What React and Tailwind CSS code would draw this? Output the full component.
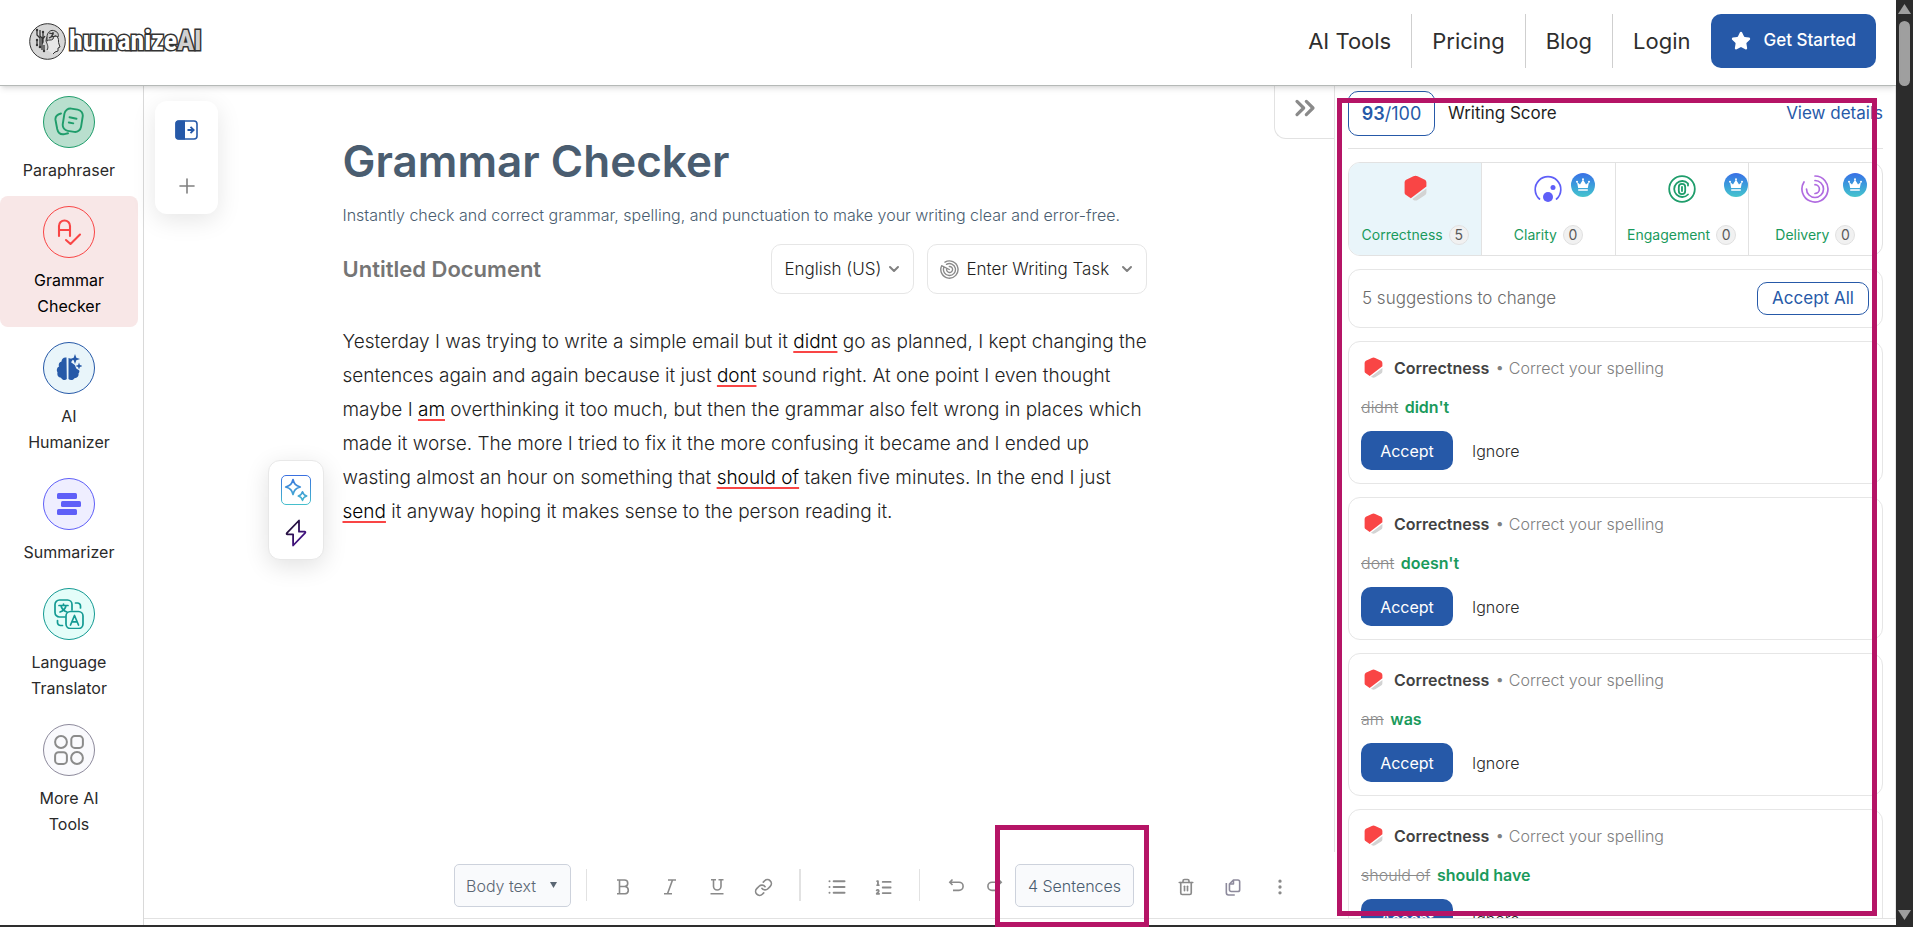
import { useState } from 'react'
import { ChevronDown, ChevronsRight, Link, List, ListOrdered, MoreVertical, Plus, Star, Trash2 } from 'lucide-react'

const SUGGESTIONS = [
  { id: 1, wrong: 'didnt', right: "didn't" },
  { id: 2, wrong: 'dont', right: "doesn't" },
  { id: 3, wrong: 'am', right: 'was' },
  { id: 4, wrong: 'should of', right: 'should have' },
]

const NAV_LINKS = ['AI Tools', 'Pricing', 'Blog', 'Login']

function Logo() {
  return (
    <a href="#" className="flex items-center gap-[3px]" aria-label="humanizeAI">
      <svg width="37" height="37" viewBox="0 0 37 37" fill="none" stroke="#333" strokeWidth="1">
        <circle cx="18.5" cy="18.5" r="17.8" fill="#d6d6d6" />
        <path d="M18 27c2-3 0-6-1-9 0-8 10-9 12-3 1 2 0 4 1 6l1 3-2 1v3l-3 1-2 2" fill="#e6e6e6" />
        <path d="M18 14c0-5 4-8 8-6 3 1 4 4 3 6-3-2-4-1-5 2-2 2-4 0-6 2z" fill="#ccc" />
        <path d="M20 10l4 1-2 3 5-1M24 9v3M20 15l4-2" strokeWidth="1.2" />
        <path d="M8 7v5l3 3v8M11 7v6l2 2v12M14 9v10l-1 2M8 17v4M16 13l-2 3M15 22v5" strokeWidth="1.3" />
        <g fill="#333" stroke="none">
          <circle cx="8" cy="7" r="1.2" />
          <circle cx="11" cy="24" r="1.3" />
          <circle cx="8" cy="17" r="1.2" />
          <circle cx="8" cy="22" r="1.2" />
          <circle cx="14" cy="9" r="1.2" />
          <circle cx="15" cy="28" r="1.2" />
        </g>
      </svg>
      <span className="font-['Liberation_Sans_Narrow','Roboto_Condensed',sans-serif] text-[28px] leading-9 font-bold text-white [-webkit-text-stroke:3px_#333] [paint-order:stroke_fill]">
        humanize<span className="text-[#d0d0d0]">AI</span>
      </span>
    </a>
  )
}

function ParaphraserIcon() {
  return (
    <svg width="30" height="30" viewBox="0 0 30 30" fill="none" stroke="#1f9d6b" strokeWidth="1.9" strokeLinecap="round" strokeLinejoin="round">
      <rect x="9.5" y="2" width="18.5" height="22.5" rx="6" transform="rotate(9 18.7 13.2)" />
      <path d="M7 6.5C3 7.5 1 9.5 1.5 13l1.7 9c.9 4 3.500 5.800 7.300 5.100l3.500-.8" />
      <path d="M15.5 10.3l7 1.4M14.8 15.5l4.5.9" />
    </svg>
  )
}

function GrammarIcon() {
  return (
    <svg width="26" height="28" viewBox="0 0 26 28" fill="none" stroke="#f94545" strokeWidth="2.1" strokeLinecap="round" strokeLinejoin="round">
      <path d="M3 18V8a5.5 5.5 0 0 1 11 0v10M3 12h11M10 22l4.5 4L24 16.5" />
    </svg>
  )
}

function HumanizerIcon() {
  return (
    <svg width="26" height="28" viewBox="0 0 26 28" fill="#2659a8">
      <path d="M10.500 3.500C7.500 3 5.500 5 5.500 7.500 3 8 2.200 10.500 3 12.500c-2.300 1-2.800 4-1.500 6-.7 3 1.200 5 3.500 5.200 1.500 2.800 4.500 2.800 5.800 1.300z" />
      <path d="M12.500 4v21c1.500 1.500 4.500 1.500 6-.8 2.800 0 4.500-2.200 4-4.700.9-1 1-2 .8-3l-3-2-1.500-3.500-3.800-2.800 2-2.700z" />
      <path d="M19 0l1.300 3.700L24 5l-3.700 1.300L19 10l-1.300-3.700L14 5l3.700-1.300z" />
      <path d="M23 8.500l.9 2.600 2.600.9-2.600.9-.9 2.600-.9-2.600-2.600-.9 2.600-.9z" />
    </svg>
  )
}

function SummarizerIcon() {
  return (
    <svg width="26" height="24" viewBox="0 0 26 24" fill="#5f5ff8">
      <rect x="1" y="1" width="20" height="6" rx="1.5" />
      <rect x="5" y="9" width="20" height="6" rx="1.5" />
      <rect x="1" y="17" width="20" height="6" rx="1.5" />
    </svg>
  )
}

function TranslatorIcon() {
  return (
    <svg width="30" height="30" viewBox="0 0 30 30" fill="none" stroke="#139a93" strokeWidth="1.7" strokeLinecap="round" strokeLinejoin="round">
      <path d="M11 18H5.500A4.500 4.500 0 0 1 1 13.500v-8A4.500 4.500 0 0 1 5.500 1h8A4.500 4.500 0 0 1 18 5.500V11" />
      <rect x="12" y="12.5" width="17" height="17" rx="4.5" />
      <path d="M5 6.500h9M9.500 5v1.500M7 6.500c.5 3 3 5.500 6 6.500M12 6.500c-.5 3-3 5.500-6 6.500" />
      <path d="M16.500 26l4-9.500 4 9.500M18 22.800h5M21.500 4h2a3 3 0 0 1 3 3v2M8.500 26.500h-2a3 3 0 0 1-3-3v-2" />
    </svg>
  )
}

function MoreToolsIcon() {
  return (
    <svg width="30" height="30" viewBox="0 0 30 30" fill="none" stroke="#8b8b8b" strokeWidth="2">
      <circle cx="7" cy="7" r="5.9" />
      <rect x="17.3" y="1.1" width="11.6" height="11.8" rx="3.5" />
      <rect x="1.1" y="17.3" width="11.8" height="11.6" rx="3.5" />
      <circle cx="23" cy="23" r="5.9" />
    </svg>
  )
}

const TOOLS = [
  { label: 'Paraphraser', icon: ParaphraserIcon, circle: 'border-[#1f9d6b] bg-[#b9dfce]' },
  { label: 'Grammar Checker', icon: GrammarIcon, circle: 'border-[#f94545] bg-[#f8e7e7]', active: true },
  { label: 'AI Humanizer', icon: HumanizerIcon, circle: 'border-[#2659a8] bg-[#e9f5fa]' },
  { label: 'Summarizer', icon: SummarizerIcon, circle: 'border-[#5f5ff8] bg-[#efeeff]' },
  { label: 'Language Translator', icon: TranslatorIcon, circle: 'border-[#139a93] bg-[#e4fdf9]' },
  { label: 'More AI Tools', icon: MoreToolsIcon, circle: 'border-[#8d8a9c] bg-[#fafafd]' },
]

function Header() {
  return (
    <header className="relative z-10 flex h-[86px] shrink-0 items-center justify-between border-b border-[#b5b9b7] bg-white pr-5 pb-[3px] pl-[29px] shadow-md">
      <Logo />
      <nav className="flex items-center">
        {NAV_LINKS.map((link) => (
          <a
            key={link}
            href="#"
            className="flex h-[54px] items-center border-r border-[#cfcfcf] px-5 text-[22px] text-[#2e2e2e] last-of-type:border-r-0"
          >
            {link}
          </a>
        ))}
        <button className="flex h-[54px] items-center gap-[13px] rounded-[10px] bg-[#2659a8] px-5 text-[17px] font-medium text-white">
          <Star size={20} fill="currentColor" />
          Get Started
        </button>
      </nav>
    </header>
  )
}

function Sidebar() {
  return (
    <aside className="flex w-36 shrink-0 flex-col gap-[5px] border-r border-[#d9d9d9] pr-[5px]">
      {TOOLS.map(({ label, icon: Icon, circle, active }) => (
        <a
          key={label}
          href="#"
          className={`flex flex-col items-center gap-[9px] rounded-lg px-5 pt-[10px] pb-2 ${active ? 'bg-[#f8e7e7] text-black' : 'text-[#2a2a2a]'}`}
        >
          <span className={`flex size-[52px] items-center justify-center rounded-full border ${circle}`}>
            <Icon />
          </span>
          <span className="text-center text-[16px] leading-[26px]">{label}</span>
        </a>
      ))}
    </aside>
  )
}

function PanelToggles() {
  return (
    <div className="mt-[15px] ml-[11px] flex h-[113px] w-[63px] shrink-0 flex-col items-center justify-between rounded-xl bg-white pt-[19px] pb-4 shadow-[0_6px_24px_rgba(0,0,0,0.1)]">
      <button aria-label="Open documents">
        <svg width="23" height="20" viewBox="0 0 23 20" fill="none" stroke="#2659a8">
          <rect x="1" y="1" width="21" height="18" rx="3" strokeWidth="1.6" />
          <path d="M3 .5h7v19H3A2.500 2.500 0 0 1 .5 17V3A2.500 2.500 0 0 1 3 .5z" fill="#2659a8" stroke="none" />
          <path d="M12.500 10h6M15.500 6.800l3.200 3.200-3.200 3.200" strokeWidth="1.8" />
        </svg>
      </button>
      <button aria-label="New document" className="text-[#808080]">
        <Plus size={24} strokeWidth={1.6} />
      </button>
    </div>
  )
}

function QuickActions() {
  return (
    <div className="absolute top-[135px] -left-[75px] flex h-[100px] w-14 flex-col items-center justify-between rounded-xl border border-[#e8e8e8] bg-white pt-[14px] pb-3 shadow-[0_6px_24px_rgba(0,0,0,0.12)]">
      <button aria-label="Improve writing">
        <svg width="30" height="30" viewBox="0 0 30 30" fill="none" stroke="url(#spark)" strokeLinejoin="round">
          <defs>
            <linearGradient id="spark" gradientUnits="userSpaceOnUse" x1="0" y1="0" x2="0" y2="30">
              <stop stopColor="#3a6fe0" />
              <stop offset="1" stopColor="#46c0cc" />
            </linearGradient>
          </defs>
          <rect x=".5" y=".5" width="29" height="29" rx="4.5" />
          <path d="M12 4.500c1.200 4.500 2.500 6 7.300 7.500-4.800 1.500-6.100 3-7.300 7.500-1.200-4.500-2.500-6-7.300-7.500 4.800-1.500 6.100-3 7.300-7.500z" strokeWidth="1.7" />
          <path d="M21.500 16.800c.7 2.600 1.500 3.500 4.200 4.300-2.700.8-3.500 1.700-4.200 4.300-.7-2.600-1.500-3.500-4.200-4.300 2.700-.8 3.500-1.700 4.200-4.300z" strokeWidth="1.6" />
        </svg>
      </button>
      <button aria-label="Quick fix">
        <svg width="22" height="28" viewBox="0 0 22 28" fill="none" stroke="url(#bolt)" strokeWidth="1.8" strokeLinejoin="round">
          <defs>
            <linearGradient id="bolt" gradientUnits="userSpaceOnUse" x1="0" y1="0" x2="22" y2="20">
              <stop stopColor="#111" />
              <stop offset="1" stopColor="#4a1196" />
            </linearGradient>
          </defs>
          <path d="M14 1.500L1.800 14.200c-.4.500-.2 1.100.5 1.100h5.800v11.200L20.200 13.800c.4-.5.200-1.100-.5-1.100H14z" />
        </svg>
      </button>
    </div>
  )
}

function TargetIcon() {
  return (
    <svg className="pointer-events-none absolute left-[13px]" width="19" height="19" viewBox="0 0 19 19" fill="none" stroke="#8a8a8a" strokeWidth="1.4" strokeLinecap="round">
      <path d="M5 2.200a8.600 8.600 0 1 1-3.300 3.600M6.500 4.300a6 6 0 1 1-2.700 3.200M9.300 6.500a3 3 0 1 1-2.600 2.200M2 5.800l7.300 3.700" />
    </svg>
  )
}

function Select({ label, option, icon, className }) {
  return (
    <div className="relative flex items-center">
      <select
        aria-label={label}
        className={`h-[50px] appearance-none rounded-[10px] border border-[#e6e6e6] bg-white pt-0.5 text-[17px] font-light text-[#1f1f1f] ${className}`}
      >
        <option>{option}</option>
      </select>
      {icon}
      <ChevronDown size={16} strokeWidth={3} className="pointer-events-none absolute right-3 text-[#808080]" />
    </div>
  )
}

function Mistake({ children }) {
  return (
    <span className="text-black underline decoration-[#f94545] decoration-2 underline-offset-[3px] [text-decoration-skip-ink:none]">
      {children}
    </span>
  )
}

function Editor() {
  return (
    <div className="flex min-h-0 flex-1 items-start border-r border-[#e2e2e2]">
      <PanelToggles />
      <div className="min-w-0 flex-1 pr-[3px]">
        <div className="mx-auto max-w-[804px] pt-[47px]">
          <h1 className="text-[44px] leading-[56px] font-semibold text-[#4a5d70]">Grammar Checker</h1>
          <p className="mt-[14px] text-[16px] leading-6 font-light text-[#4a5d70]">
            Instantly check and correct grammar, spelling, and punctuation to make your writing clear and error-free.
          </p>
          <div className="mt-[17px] flex items-center justify-between">
            <h2 className="text-[22px] font-semibold text-[#757575]">Untitled Document</h2>
            <div className="flex gap-[13px]">
              <Select label="Language" option="English (US)" className="w-[143px] pl-[13px]" />
              <Select label="Writing task" option="Enter Writing Task" icon={<TargetIcon />} className="w-[220px] pl-[39px]" />
            </div>
          </div>
          <div className="relative mt-[31px] -mr-3">
            <QuickActions />
            <p className="text-[19px] leading-[34px] font-light text-[#1f1f1f]">
              Yesterday I was trying to write a simple email but it <Mistake>didnt</Mistake> go as planned, I kept
              changing the sentences again and again because it just <Mistake>dont</Mistake> sound right. At one point I
              even thought maybe I <Mistake>am</Mistake> overthinking it too much, but then the grammar also felt wrong
              in places which made it worse. The more I tried to fix it the more confusing it became and I ended up
              wasting almost an hour on something that <Mistake>should of</Mistake> taken five minutes. In the end I
              just <Mistake>send</Mistake> it anyway hoping it makes sense to the person reading it.
            </p>
          </div>
        </div>
      </div>
      <button aria-label="Collapse panel" className="flex h-[53px] w-[60px] shrink-0 items-center justify-center rounded-bl-xl border-b border-l border-[#e2e2e2] pb-2 text-[#8a8a8a]">
        <ChevronsRight size={32} strokeWidth={2.4} />
      </button>
    </div>
  )
}

function ToolButton({ label, children, className = 'w-[47px]' }) {
  return (
    <button aria-label={label} className={`flex h-8 items-center justify-center pt-1 text-[#8a8a8a] ${className}`}>
      {children}
    </button>
  )
}

function Glyph({ d }) {
  return (
    <svg width="18" height="18" viewBox="0 0 18 18" fill="none" stroke="currentColor" strokeWidth="1.6">
      <path d={d} />
    </svg>
  )
}

function Toolbar() {
  return (
    <div className="flex h-[66px] shrink-0 items-center justify-end pr-8">
      <div className="relative mr-[15px] flex items-center">
        <select
          aria-label="Text style"
          className="h-[43px] w-[117px] appearance-none rounded-[5px] border border-[#cdd2dc] bg-[#f9fafc] pt-0.5 pl-[11px] text-[16px] font-light text-[#5b6673]"
        >
          <option>Body text</option>
        </select>
        <svg className="pointer-events-none absolute right-[14px]" width="7" height="6" viewBox="0 0 7 6" fill="#5b6673">
          <path d="M0 0h7L3.500 6z" />
        </svg>
      </div>
      <div className="flex border-l border-[#e2e2e2] px-3">
        <ToolButton label="Bold"><Glyph d="M3 2h7.500a3.200 3.200 0 0 1 0 6.500H5.500M5.500 8.500h5.700a3.700 3.700 0 0 1 0 7.300H3M5.500 2v13.800" /></ToolButton>
        <ToolButton label="Italic"><Glyph d="M7 2h8M3 15.800h8M11.500 2L6.500 15.800" /></ToolButton>
        <ToolButton label="Underline"><Glyph d="M3 1.800h5M10.500 1.800h5M5.500 1.800v6.500a3.700 3.700 0 0 0 7.500 0V1.800M2.500 15.800h13" /></ToolButton>
        <ToolButton label="Link"><Link size={19} strokeWidth={2.1} /></ToolButton>
      </div>
      <div className="flex border-l-2 border-[#e2e2e2] px-3">
        <ToolButton label="Bullet list"><List size={20} strokeWidth={2.4} /></ToolButton>
        <ToolButton label="Numbered list"><ListOrdered size={19} strokeWidth={2.3} /></ToolButton>
      </div>
      <div className="flex border-l border-[#e2e2e2] pr-1 pl-3">
        <ToolButton label="Undo"><Glyph d="M5.500 1.500L2.800 4.200 5.500 7M2.800 4.200h9.200a4 4 0 0 1 0 8.200H6" /></ToolButton>
        <ToolButton label="Redo" className="w-8"><Glyph d="M12.500 1.500l2.700 2.700L12.500 7M15.200 4.200H6a4 4 0 0 0 0 8.200h6" /></ToolButton>
      </div>
      <div className="relative mr-7">
        <button className="h-[43px] w-[119px] rounded-[5px] border border-[#cdd2dc] bg-[#f9fafc] pt-0.5 text-[16px] font-light text-[#4a5d70]">
          4 Sentences
        </button>
        <div className="pointer-events-none absolute -top-[39px] -right-[15px] -bottom-5 -left-5 z-20 border-5 border-[#b51466]" />
      </div>
      <ToolButton label="Delete"><Trash2 size={18} strokeWidth={2.2} /></ToolButton>
      <ToolButton label="Copy">
        <svg width="16" height="19" viewBox="0 0 18 20" fill="none" stroke="#8d8a9c" strokeWidth="1.8" strokeLinejoin="round">
          <path d="M9.500 1.500h5a2 2 0 0 1 2 2v9a2 2 0 0 1-2 2H7a2 2 0 0 1-2-2V6zM9.500 1.500V6H5M1.500 5v11A2.500 2.500 0 0 0 4 18.500h7" />
        </svg>
      </ToolButton>
      <ToolButton label="More"><MoreVertical size={20} /></ToolButton>
    </div>
  )
}

function ShieldIcon({ className }) {
  return (
    <svg className={className} viewBox="0 0 22 26">
      <path d="M9 1.300a4 4 0 0 1 4 0l7 3.200A3 3 0 0 1 21.500 7v4L6.500 22.500l-5-3.500A3 3 0 0 1 .5 17V7A3 3 0 0 1 2 4.500z" fill="#f94545" />
      <path d="M21.500 13v4a3 3 0 0 1-1.500 2.500l-7 4.500a4 4 0 0 1-4 0l-1-.8z" fill="#d3d3d3" />
    </svg>
  )
}

function ClarityIcon() {
  return (
    <svg width="28" height="28" viewBox="0 0 28 28" fill="#5f5ff8">
      <path d="M5.500 24a12.800 12.800 0 1 1 17 0" fill="none" stroke="#5f5ff8" strokeWidth="1.7" strokeLinecap="round" />
      <circle cx="14" cy="22" r="5" />
      <circle cx="19" cy="12.5" r="2.5" />
    </svg>
  )
}

function EngagementIcon() {
  return (
    <svg width="28" height="28" viewBox="0 0 28 28" fill="none" stroke="#1f9d6b" strokeWidth="1.8" strokeLinecap="round">
      <circle cx="14" cy="14" r="12.8" />
      <path d="M20 8.500a8 8 0 1 0 0 11M20 8.500v2" />
      <rect x="10.8" y="8.8" width="6.4" height="10.4" rx="3.2" />
      <path d="M14 12v4" />
    </svg>
  )
}

function DeliveryIcon() {
  return (
    <svg width="28" height="28" viewBox="0 0 28 28" fill="none" stroke="#b06be0" strokeWidth="1.7" strokeLinecap="round">
      <path d="M14 1a13 13 0 1 1-11 6M14 5.500A8.500 8.500 0 1 1 5.500 14M14 9.700a4.400 4.400 0 0 1 0 8.800" />
    </svg>
  )
}

function Crown() {
  return (
    <span className="absolute -top-[51px] -right-3 flex size-6 items-center justify-center rounded-full bg-linear-to-b from-[#3a6fe6] to-[#46c4cc]">
      <svg width="14" height="14" viewBox="0 0 14 14" fill="#fff">
        <path d="M1 4l3 2.500L7 1.500l3 5L13 4l-1.200 6H2.200zM2.200 11.200h9.600v1.500H2.200z" />
        <circle cx="7" cy="1.3" r="1" />
        <circle cx="1" cy="3.8" r="1" />
        <circle cx="13" cy="3.8" r="1" />
      </svg>
    </span>
  )
}

const CATEGORIES = [
  { name: 'Correctness', count: 5, icon: <ShieldIcon className="h-[27px] w-[23px]" /> },
  { name: 'Clarity', count: 0, icon: <ClarityIcon />, premium: true },
  { name: 'Engagement', count: 0, icon: <EngagementIcon />, premium: true },
  { name: 'Delivery', count: 0, icon: <DeliveryIcon />, premium: true },
]

function CategoryTabs() {
  const [selected, setSelected] = useState('Correctness')

  return (
    <div className="mt-[13px] grid h-[94px] shrink-0 grid-cols-4 divide-x divide-[#e2e2e2] overflow-hidden rounded-xl border border-[#e2e2e2]">
      {CATEGORIES.map(({ name, count, icon, premium }) => (
        <button
          key={name}
          onClick={() => setSelected(name)}
          className={`flex flex-col items-center justify-between pt-3 pb-[10px] ${selected === name ? 'bg-[#e9f5fa]' : ''}`}
        >
          {icon}
          <span className="relative flex items-center gap-[6px] text-[14px] text-[#1a9a5c]">
            {name}
            <span className="flex size-5 items-center justify-center rounded-full border border-[#e0e0e0] bg-[#f1f1f1] text-[#5a5a5a]">{count}</span>
            {premium && <Crown />}
          </span>
        </button>
      ))}
    </div>
  )
}

function SuggestionCard({ wrong, right }) {
  return (
    <article className="h-[143px] shrink-0 rounded-xl border border-[#e6e6e6] px-3 pt-[14px]">
      <div className="flex h-6 items-center text-[16px]">
        <ShieldIcon className="mr-[11px] ml-[3px] h-[22px] w-[19px]" />
        <span className="font-semibold text-[#424242]">Correctness</span>
        <span className="ml-1.5 font-light text-[#808080]">• Correct your spelling</span>
      </div>
      <p className="mt-[15px] text-[16px] leading-6">
        <del className="font-light text-[#8a8a8a]">{wrong}</del>{' '}
        <ins className="ml-0.5 font-semibold text-[#1a9a5c] no-underline">{right}</ins>
      </p>
      <div className="mt-3 flex items-center gap-[19px] text-[16px]">
        <button className="h-[39px] w-[92px] rounded-[10px] bg-[#2659a8] text-white">Accept</button>
        <button className="font-light text-[#2a2a2a]">Ignore</button>
      </div>
    </article>
  )
}

function ReviewPanel() {
  return (
    <aside className="relative flex w-[561px] shrink-0 flex-col overflow-hidden border-r border-[#e6e6e6] pt-[5px] pr-3 pl-[13px]">
      <div className="flex shrink-0 items-center border-b border-[#e2e2e2] pb-3 text-[17px]">
        <div className="flex h-[45px] w-[87px] items-center justify-center rounded-[10px] border border-[#2659a8] text-[18px] text-[#2659a8]">
          <strong className="font-semibold">93</strong>/100
        </div>
        <span className="ml-[13px] text-[#1f1f1f]">Writing Score</span>
        <a href="#" className="ml-auto text-[#2659a8]">View details</a>
      </div>
      <CategoryTabs />
      <div className="mt-[13px] flex h-[59px] shrink-0 items-center justify-between rounded-xl border border-[#e6e6e6] px-[13px] text-[17px]">
        <span className="font-light text-[#6b6b6b]">5 suggestions to change</span>
        <button className="h-[33px] w-[112px] rounded-[10px] border border-[#2659a8] text-[#2659a8]">Accept All</button>
      </div>
      <div className="mt-[13px] flex flex-col gap-[13px]">
        {SUGGESTIONS.map((item) => (
          <SuggestionCard key={item.id} wrong={item.wrong} right={item.right} />
        ))}
      </div>
      <div className="pointer-events-none absolute top-3 right-[18px] bottom-[2px] left-[2px] border-5 border-[#b51466]" />
    </aside>
  )
}

function Scrollbar() {
  return (
    <div className="flex w-[17px] shrink-0 flex-col items-center bg-[#2c2c2c]">
      <svg className="mt-1 mb-[7px]" width="13" height="10" viewBox="0 0 13 10" fill="#9f9f9f">
        <path d="M6.500 0L13 10H0z" />
      </svg>
      <div className="h-[65px] w-[11px] rounded-full bg-[#9f9f9f]" />
      <svg className="mt-auto mb-[7px]" width="13" height="10" viewBox="0 0 13 10" fill="#9f9f9f">
        <path d="M6.500 10L13 0H0z" />
      </svg>
    </div>
  )
}

export default function App() {
  return (
    <div className="flex h-screen overflow-hidden bg-white font-['Inter',sans-serif]">
      <div className="flex min-w-0 flex-1 flex-col">
        <Header />
        <div className="flex min-h-0 flex-1 border-b-2 border-[#2e2e2e]">
          <Sidebar />
          <div className="flex min-w-0 flex-1 flex-col pb-[6px]">
            <div className="flex min-h-0 flex-1 border-b border-[#e2e2e2]">
              <main className="flex min-w-0 flex-1 flex-col">
                <Editor />
                <Toolbar />
              </main>
              <ReviewPanel />
            </div>
          </div>
        </div>
      </div>
      <Scrollbar />
    </div>
  )
}
